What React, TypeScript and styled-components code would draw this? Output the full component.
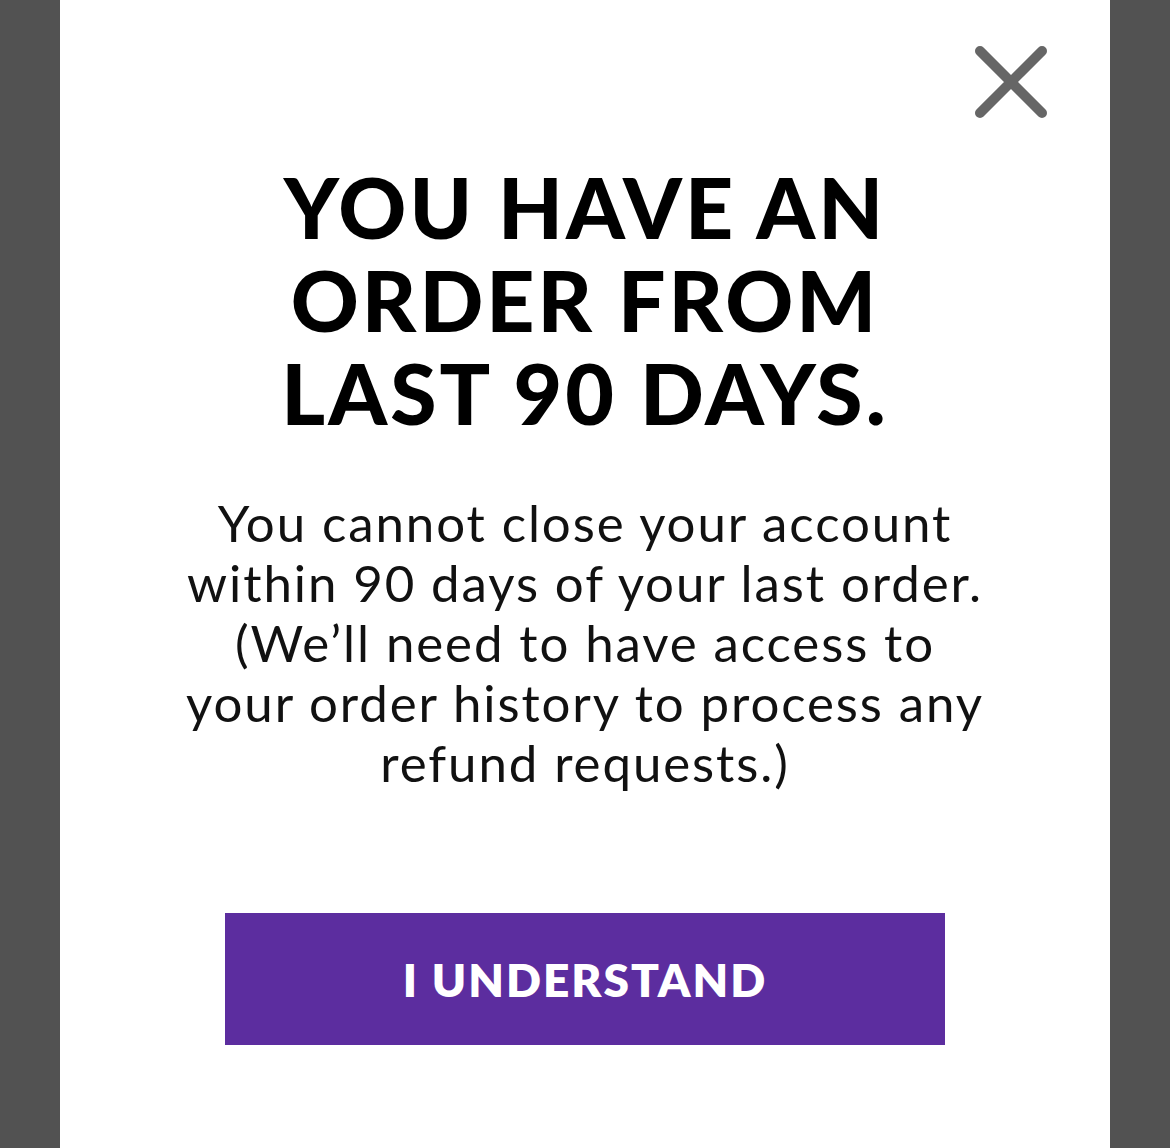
import React from "react";
import styled, { createGlobalStyle } from "styled-components";

const Global = createGlobalStyle`
  html, body { margin: 0; padding: 0; background: #525252; }
  body { font-family: Lato, "Open Sans", sans-serif; }
`;

const Page = styled.div`
  display: flex;
  justify-content: center;
  min-height: 1148px;
  background: #525252;
`;

const Panel = styled.div`
  position: relative;
  width: 1050px;
  min-height: 1148px;
  background: #ffffff;
  display: flex;
  flex-direction: column;
  align-items: center;
  padding-top: 160px;
  box-sizing: border-box;
`;

const Close = styled.button`
  position: absolute;
  top: 40px;
  right: 57px;
  width: 84px;
  height: 84px;
  border: none;
  background: transparent;
  padding: 0;
  cursor: pointer;
  display: flex;
  align-items: center;
  justify-content: center;
`;

const Title = styled.h1`
  margin: 0;
  font-family: Lato, sans-serif;
  font-weight: 900;
  font-size: 84px;
  line-height: 93px;
  letter-spacing: 3px;
  text-align: center;
  color: #000;
  width: 760px;
`;

const Line = styled.span`
  display: block;
  white-space: nowrap;
`;

const Body = styled.p`
  margin: 54px 0 0;
  font-family: Lato, sans-serif;
  font-weight: 400;
  font-size: 51px;
  line-height: 60px;
  letter-spacing: 1.9px;
  text-align: center;
  color: #111;
  width: 900px;
`;

const Button = styled.button`
  margin-top: 120px;
  width: 720px;
  height: 132px;
  border: none;
  background: #5c2d9f;
  color: #fff;
  font-family: Lato, sans-serif;
  font-weight: 800;
  font-size: 46px;
  letter-spacing: 2px;
  cursor: pointer;
`;

const titleLines = ["YOU HAVE AN", "ORDER FROM", "LAST 90 DAYS."];
const bodyLines = [
  "You cannot close your account",
  "within 90 days of your last order.",
  "(We’ll need to have access to",
  "your order history to process any",
  "refund requests.)",
];

export default function App() {
  return (
    <Page>
      <Global />
      <Panel>
        <Close aria-label="Close">
          <svg width="84" height="84" viewBox="0 0 84 84">
            <path d="M11 11 L73 73 M73 11 L11 73" stroke="#666" strokeWidth="10" strokeLinecap="round" />
          </svg>
        </Close>
        <Title>
          {titleLines.map((l) => (
            <Line key={l}>{l}</Line>
          ))}
        </Title>
        <Body>
          {bodyLines.map((l) => (
            <Line key={l}>{l}</Line>
          ))}
        </Body>
        <Button>I UNDERSTAND</Button>
      </Panel>
    </Page>
  );
}
